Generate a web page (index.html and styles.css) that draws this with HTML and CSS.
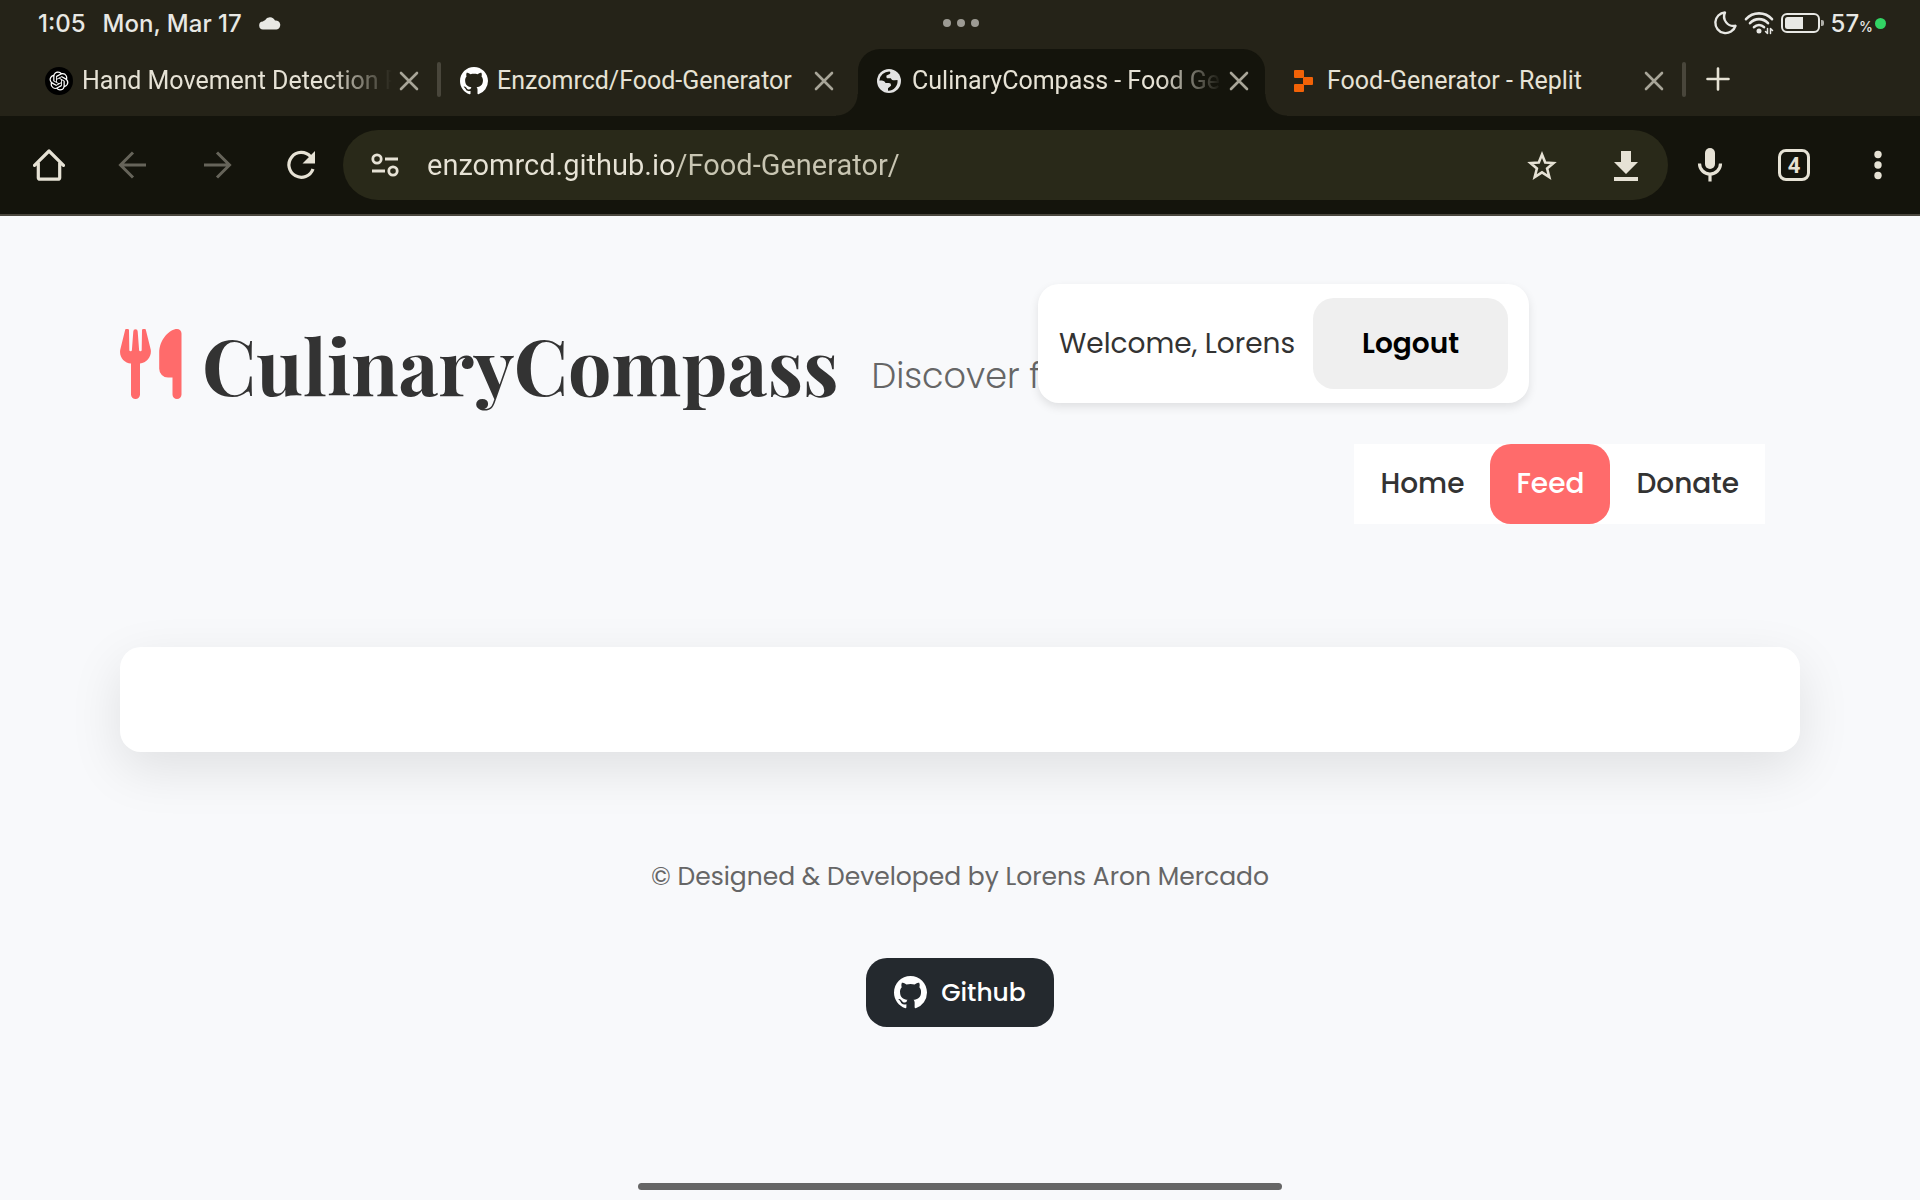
FILE: index.html
```html
<!DOCTYPE html>
<html lang="en">
<head>
<meta charset="utf-8">
<meta name="viewport" content="width=device-width, initial-scale=1">
<title>CulinaryCompass - Food Generator</title>
<link rel="stylesheet" href="styles.css">
</head>
<body>
<svg class="sprite" aria-hidden="true">
  <symbol id="github" viewBox="0 0 16 16"><path d="M8 0C3.58 0 0 3.58 0 8c0 3.54 2.29 6.53 5.47 7.59.4.07.55-.17.55-.38 0-.19-.01-.82-.01-1.49-2.01.37-2.53-.49-2.69-.94-.09-.23-.48-.94-.82-1.13-.28-.15-.68-.52-.01-.53.63-.01 1.08.58 1.23.82.72 1.21 1.87.87 2.33.66.07-.52.28-.87.51-1.07-1.78-.2-3.64-.89-3.64-3.95 0-.87.31-1.59.82-2.15-.08-.2-.36-1.02.08-2.12 0 0 .67-.21 2.2.82.64-.18 1.32-.27 2-.27s1.36.09 2 .27c1.53-1.04 2.2-.82 2.2-.82.44 1.1.16 1.92.08 2.12.51.56.82 1.27.82 2.15 0 3.07-1.87 3.75-3.65 3.95.29.25.54.73.54 1.48 0 1.07-.01 1.93-.01 2.2 0 .21.15.46.55.38A8.01 8.01 0 0 0 16 8c0-4.42-3.58-8-8-8z"/></symbol>
  <symbol id="close" viewBox="0 0 24 24"><path d="M4 4l16 16M20 4L4 20" fill="none" stroke="currentColor" stroke-width="2.6" stroke-linecap="round"/></symbol>
</svg>

<header class="browser">
  <div class="status">
    <div class="status-left">
      <span>1:05</span>
      <span>Mon, Mar 17</span>
      <svg class="cloud" width="22" height="14" viewBox="0 0 22 14"><path d="M4.5 13.500a4 4 0 0 1-.6-8A3.200 3.200 0 0 1 6 4.200 5.600 5.600 0 0 1 16 4.600a4.500 4.500 0 0 1 1.500 8.900z" fill="currentColor"/></svg>
    </div>
    <svg class="dots" width="38" height="8" viewBox="0 0 38 8"><circle cx="4" cy="4" r="4"/><circle cx="18" cy="4" r="4"/><circle cx="32" cy="4" r="4"/></svg>
    <div class="status-right">
      <svg class="moon" width="24" height="24" viewBox="0 0 24 24"><path d="M12 1.500A10.300 10.300 0 1 0 22.500 14.800 9.500 9.500 0 0 1 12 1.500z" fill="none" stroke="currentColor" stroke-width="2.400" stroke-linejoin="round"/></svg>
      <svg class="wifi" width="30" height="24" viewBox="0 0 30 24" fill="none" stroke="currentColor" stroke-width="2.600" stroke-linecap="round"><path d="M2 8.200C9 .4 21 .4 28 8.200M6 12.200c5-5.400 13-5.400 18 0M10 16.200c2.800-3 7.200-3 10 0"/><circle cx="15" cy="20" r="1.500" fill="currentColor" stroke-width="2"/><path d="M23.500 17.500v5M26.500 17.500v5M21.500 20.500l2 2M28.500 19.500l-2-2" stroke-width="1.500"/></svg>
      <svg class="battery" width="43" height="20" viewBox="0 0 43 20"><rect x="1" y="1" width="37" height="18" rx="5" fill="none" stroke="currentColor" stroke-width="2"/><path d="M4 6.500A2.500 2.500 0 0 1 6.500 4H22v12H6.500A2.500 2.500 0 0 1 4 13.500z" fill="currentColor"/><path d="M40 7h1a2 2 0 0 1 2 2v2a2 2 0 0 1-2 2h-1z" fill="currentColor" opacity=".7"/></svg>
      <div class="power">
        <span class="charge">57<small>%</small></span>
        <i class="privacy"></i>
      </div>
    </div>
  </div>

  <nav class="tabs" aria-label="Open tabs">
    <div class="tab">
      <svg class="favicon" viewBox="0 0 28 28"><circle cx="14" cy="14" r="14" fill="#000"/><g transform="translate(4.500 4.500) scale(.79)" fill="#fff"><path d="M22.282 9.821a5.985 5.985 0 0 0-.516-4.911 6.046 6.046 0 0 0-6.510-2.900A6.065 6.065 0 0 0 4.981 4.182a5.985 5.985 0 0 0-3.998 2.900 6.046 6.046 0 0 0 .743 7.097 5.980 5.980 0 0 0 .511 4.911 6.051 6.051 0 0 0 6.515 2.900A5.985 5.985 0 0 0 13.260 24a6.056 6.056 0 0 0 5.772-4.206 5.989 5.989 0 0 0 3.998-2.900 6.056 6.056 0 0 0-.748-7.073zm-9.022 12.608a4.476 4.476 0 0 1-2.876-1.041l.142-.080 4.778-2.758a.795.795 0 0 0 .393-.681v-6.737l2.020 1.169a.071.071 0 0 1 .038.052v5.583a4.504 4.504 0 0 1-4.495 4.494zm-9.661-4.125a4.471 4.471 0 0 1-.535-3.014l.142.085 4.783 2.758a.771.771 0 0 0 .781 0l5.843-3.369v2.332a.080.080 0 0 1-.033.062L9.740 19.950a4.499 4.499 0 0 1-6.141-1.646zM2.341 7.896a4.485 4.485 0 0 1 2.366-1.973V11.600a.766.766 0 0 0 .388.677l5.814 3.354-2.020 1.169a.076.076 0 0 1-.071 0l-4.830-2.787A4.504 4.504 0 0 1 2.341 7.872zm16.596 3.856L13.104 8.364 15.119 7.200a.076.076 0 0 1 .071 0l4.830 2.791a4.494 4.494 0 0 1-.677 8.104v-5.677a.790.790 0 0 0-.407-.667zm2.011-3.023l-.142-.085-4.774-2.782a.776.776 0 0 0-.785 0L9.409 9.230V6.897a.066.066 0 0 1 .028-.062l4.830-2.787a4.499 4.499 0 0 1 6.680 4.660zM8.307 12.863l-2.020-1.164a.080.080 0 0 1-.038-.057V6.074a4.499 4.499 0 0 1 7.376-3.454l-.142.081L8.704 5.459a.795.795 0 0 0-.393.681zm1.098-2.365l2.602-1.500 2.607 1.500v2.999l-2.597 1.500-2.607-1.500z"/></g></svg>
      <a class="title fade" href="#">Hand Movement Detection Pr</a>
      <button class="close" aria-label="Close tab"><svg><use href="#close"/></svg></button>
    </div>
    <i class="sep"></i>
    <div class="tab">
      <svg class="favicon" fill="#fff"><use href="#github"/></svg>
      <a class="title" href="#">Enzomrcd/Food-Generator</a>
      <button class="close" aria-label="Close tab"><svg><use href="#close"/></svg></button>
    </div>
    <i class="sep hidden"></i>
    <div class="tab active">
      <svg class="favicon" viewBox="0 0 28 28"><circle cx="14" cy="14" r="12" fill="#e3e3e3"/><path d="M4.300 13.500A10 10 0 0 1 14.500 4.400c1 .6 1.300 1.600.2 2.500L11.500 8.500c-.4 2 .2 2.800 1.700 2.800h2.600c.8 1.800 1.700 2 3.700 2l3-.2a9.500 9.500 0 0 1-9.500 10.700v-2.600l3-2.500c0-1.900-.5-2.600-2.300-2.600h-3.200c-1-2.200-2.200-2.600-6.200-2.600z" fill="#14140c"/></svg>
      <a class="title fade" href="#" aria-current="page">CulinaryCompass - Food Gene</a>
      <button class="close" aria-label="Close tab"><svg><use href="#close"/></svg></button>
    </div>
    <i class="sep hidden"></i>
    <div class="tab">
      <svg class="favicon" viewBox="0 0 28 28" fill="#f26207"><rect x="4" y="3" width="10" height="8" rx="1"/><rect x="13" y="10" width="10" height="8" rx="1"/><rect x="4" y="17" width="10" height="8" rx="1"/></svg>
      <a class="title" href="#">Food-Generator - Replit</a>
      <button class="close" aria-label="Close tab"><svg><use href="#close"/></svg></button>
    </div>
    <i class="sep"></i>
    <button class="new-tab" aria-label="New tab"><svg viewBox="0 0 24 24" width="24" height="24"><path d="M12 1.500v21M1.500 12h21" fill="none" stroke="currentColor" stroke-width="2.600" stroke-linecap="round"/></svg></button>
  </nav>

  <div class="toolbar">
    <button class="tool" aria-label="Home"><svg viewBox="0 0 32 32"><path d="M1.500 16.300L16 2l14.500 14.300M5.300 14v14.700a1.500 1.500 0 0 0 1.500 1.500h18.400a1.500 1.500 0 0 0 1.500-1.500V14" fill="none" stroke="currentColor" stroke-width="3.200" stroke-linejoin="round" stroke-linecap="round"/></svg></button>
    <button class="tool dim" aria-label="Back"><svg viewBox="0 0 32 32"><path d="M29 16H4M16 3.500L3.500 16 16 28.500" fill="none" stroke="currentColor" stroke-width="3"/></svg></button>
    <button class="tool dim" aria-label="Forward"><svg viewBox="0 0 32 32"><path d="M3 16h25M16 3.500L28.500 16 16 28.500" fill="none" stroke="currentColor" stroke-width="3"/></svg></button>
    <button class="tool" aria-label="Reload"><svg viewBox="0 0 32 32"><path d="M25.500 7.500A12.400 12.400 0 1 0 28 20" fill="none" stroke="currentColor" stroke-width="3.200"/><path d="M30 2v12.500H17.500z" fill="currentColor"/></svg></button>
    <div class="omnibox">
      <button class="tool" aria-label="Site information"><svg viewBox="0 0 32 32" fill="none" stroke="currentColor" stroke-width="2.800"><circle cx="8" cy="10" r="4.200"/><circle cx="24" cy="22" r="4.200"/><path d="M16 10h13M3 22h13"/></svg></button>
      <input class="url" type="text" aria-label="Address" value="enzomrcd.github.io/Food-Generator/">
      <button class="tool" aria-label="Bookmark"><svg viewBox="0 0 32 32"><path d="M16 5.500l3.200 8 8.300.5-6.400 5.500 2.200 8.500L16 23.300 8.700 28l2.200-8.500L4.500 14l8.300-.5z" fill="none" stroke="currentColor" stroke-width="2.600"/></svg></button>
      <button class="tool" aria-label="Download"><svg viewBox="0 0 32 32" fill="currentColor"><path d="M11 2h10v11h7L16 25 4 13h7zM4 28h24v4H4z"/></svg></button>
    </div>
    <button class="tool" aria-label="Voice search"><svg class="mic" viewBox="0 0 32 36"><rect x="11" y="1" width="10" height="21" rx="5" fill="currentColor"/><path d="M5.500 16.500c0 6 4.700 10.500 10.500 10.500s10.500-4.500 10.500-10.500M16 27v7.500" fill="none" stroke="currentColor" stroke-width="3.200"/></svg></button>
    <button class="tool" aria-label="Switch tabs, 4 open"><span class="count">4</span></button>
    <button class="tool" aria-label="Menu"><svg viewBox="0 0 32 32" fill="currentColor"><circle cx="16" cy="5.500" r="3.700"/><circle cx="16" cy="16" r="3.700"/><circle cx="16" cy="26.500" r="3.700"/></svg></button>
  </div>
</header>

<div class="app">
  <header class="masthead">
    <div class="brand">
      <svg class="utensils" width="62" height="70" viewBox="0 0 62 70" fill="currentColor"><path d="M5 1.500a2 2 0 0 1 4 .5l.3 19a1.300 1.300 0 0 0 2.600 0L13.300 2.500a2.200 2.200 0 0 1 4.400 0L19.100 21a1.300 1.300 0 0 0 2.600 0L22 2a2 2 0 0 1 4-.5l4.700 19C32 27 27 34 20 34.600V65.500a4.500 4.500 0 0 1-9 0V34.600C4 34-1.200 27.500.3 20.500z"/><path d="M57 0a4.500 4.500 0 0 1 4.500 4.500v61a4.500 4.500 0 0 1-9 0V48.500H48a8.800 8.800 0 0 1-8.800-8.800V24C39.200 10 50 0 57 0z"/></svg>
      <h1>CulinaryCompass</h1>
      <p class="tagline">Discover fl</p>
    </div>
    <div class="account">
      <span>Welcome, Lorens</span>
      <button class="logout">Logout</button>
    </div>
    <nav class="menu">
      <a href="#">Home</a>
      <a class="current" href="#">Feed</a>
      <a href="#">Donate</a>
    </nav>
  </header>
  <main class="feed"></main>
  <footer class="footer">
    <p>© Designed &amp; Developed by Lorens Aron Mercado</p>
    <a class="github" href="#"><svg width="33" height="33" fill="#fff"><use href="#github"/></svg>Github</a>
  </footer>
</div>
<div class="gesture"></div>
</body>
</html>
```
FILE: styles.css
```css
* { box-sizing: border-box; }
body {
  margin: 0;
  min-height: 100vh;
  background: #f8f9fb;
  font-family: Poppins, Inter, sans-serif;
  color: #333;
}
button { border: 0; padding: 0; background: none; font: inherit; color: inherit; cursor: pointer; }
a { color: inherit; text-decoration: none; }
svg { display: block; }
.sprite { display: none; }

/* browser chrome */
.browser { background: #252318; color: #e6e2d5; font-family: Roboto, sans-serif; border-bottom: 2px solid #4a473e; }

.status {
  display: grid;
  grid-template-columns: 1fr auto 1fr;
  align-items: center;
  height: 49px;
  padding: 0 34px 3px 38px;
  color: #e8e8e4;
  font-family: Inter, sans-serif;
  font-size: 24px;
  font-weight: 500;
}
.status-left { display: flex; align-items: center; gap: 17px; }
.dots { fill: #9d9b94; }
.status-right { display: flex; align-items: center; justify-content: flex-end; gap: 7px; }
.power { display: flex; align-items: center; gap: 2px; }
.charge { display: flex; align-items: baseline; }
.charge small { font-size: 14px; }
.privacy { width: 11px; height: 11px; border-radius: 50%; background: #32d464; }

.tabs { display: flex; align-items: stretch; height: 67px; padding-left: 28px; }
.tab { position: relative; display: flex; align-items: center; flex: 0 1 407px; min-width: 0; padding: 0 9px 4px 17px; }
.tab.active { background: #14140c; border-radius: 22px 22px 0 0; }
.tab.active::before, .tab.active::after {
  content: "";
  position: absolute;
  bottom: 0;
  width: 22px;
  height: 22px;
}
.tab.active::before { right: 100%; background: radial-gradient(circle at 0 0, transparent 21px, #14140c 22px); }
.tab.active::after { left: 100%; background: radial-gradient(circle at 100% 0, transparent 21px, #14140c 22px); }
.favicon { flex: none; width: 28px; height: 28px; margin-right: 9px; }
.title { flex: 1; overflow: hidden; white-space: nowrap; font-size: 25px; line-height: 32px; }
.fade { -webkit-mask-image: linear-gradient(90deg, #000 80%, transparent 100%); mask-image: linear-gradient(90deg, #000 80%, transparent 100%); }
.close { display: grid; place-items: center; width: 34px; height: 34px; color: #a8a598; }
.close svg { width: 24px; height: 24px; }
.sep { flex: none; width: 4px; height: 35px; margin: 13px 2px 0; border-radius: 2px; background: #49463b; }
.sep.hidden { visibility: hidden; }
.new-tab { display: grid; place-items: center; width: 60px; padding-bottom: 8px; }

.toolbar { display: flex; align-items: center; height: 98px; padding-left: 7px; background: #14140c; }
.tool { flex: none; display: grid; place-items: center; width: 84px; height: 70px; }
.tool svg { width: 32px; height: 32px; }
.tool .mic { height: 36px; }
.dim { color: #66645a; }
.omnibox { flex: 1; min-width: 0; display: flex; height: 70px; border-radius: 35px; background: #292919; }
.url {
  flex: 1;
  min-width: 0;
  border: 0;
  padding: 0;
  outline: 0;
  font: 29px/70px Roboto, sans-serif;
  color: #e6e2d5;
  background: linear-gradient(90deg, #e6e2d5 247px, #c8c5b2 247px);
  -webkit-background-clip: text;
  background-clip: text;
  -webkit-text-fill-color: transparent;
}
.count {
  width: 32px;
  height: 32px;
  border: 3px solid;
  border-radius: 8px;
  font-size: 22px;
  font-weight: 700;
  line-height: 27px;
  text-align: center;
}

/* page */
.app { padding: 0 120px; }
.masthead { position: relative; padding: 100px 35px 0 0; }
.brand { display: flex; align-items: center; margin-right: -35px; }
.utensils { flex: none; margin-right: 20px; color: #ff6b6b; }
h1 { margin: 0; font: 700 77px/96px "Playfair Display", "Liberation Serif", serif; }
.tagline { margin: 24px 0 0 33px; font-size: 35px; line-height: 44px; font-weight: 300; color: #666; white-space: nowrap; }
.account {
  position: absolute;
  top: 68px;
  left: 918px;
  display: flex;
  align-items: center;
  gap: 18px;
  padding: 14px 21px;
  border-radius: 21px;
  background: #fff;
  box-shadow: 0 4px 10px rgba(0, 0, 0, .1);
  font-size: 28px;
}
.logout { padding: 24px 49px; line-height: 43px; border-radius: 21px; background: #efefef; color: #000; font-weight: 600; }
.menu { display: flex; width: fit-content; margin: 32px 0 0 auto; background: #fff; font-size: 28px; font-weight: 500; line-height: 44px; }
.menu a { padding: 18px 26px; border-radius: 21px; }
.menu .current { background: #ff6b6b; color: #fff; }
.feed { height: 105px; margin-top: 123px; border-radius: 21px; background: #fff; box-shadow: 0 17px 52px rgba(0, 0, 0, .1); }
.footer { display: flex; flex-direction: column; align-items: center; padding-top: 104px; font-size: 25px; line-height: 41px; color: #666; }
.footer p { margin: 0; }
.github {
  display: flex;
  align-items: center;
  gap: 14px;
  margin-top: 61px;
  padding: 14px 28px;
  border-radius: 21px;
  background: #24292e;
  color: #fff;
  font-weight: 500;
}
.gesture { position: fixed; bottom: 10px; left: 50%; width: 644px; height: 7px; margin-left: -322px; border-radius: 4px; background: #666; }
```
